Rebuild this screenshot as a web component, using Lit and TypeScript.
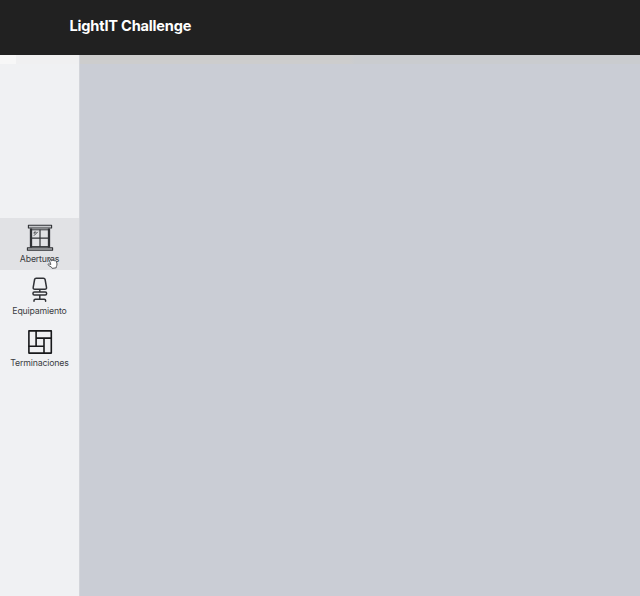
import { LitElement, html, css, svg } from "lit";
import { customElement, property } from "lit/decorators.js";

const icons = {
  window: svg`
    <path d="M5 4.5v19.2M23 4.5v19.2" stroke-width="2.3" stroke-linecap="butt"/>
    <path d="M6 5.8h16M6 22.6h16" stroke-width="1"/>
    <path d="M14 6v16.4M6 14.2h16" stroke-width="1.2"/>
    <path d="M8.2 11.4 11.5 8.1M8.2 9.4V8.1h1.6" stroke-width=".9"/>
    <rect x="2.4" y="1.2" width="23.2" height="2.8" stroke-width="1.1" fill="#c6c8cb"/>
    <rect x="1.4" y="23.8" width="25.2" height="2.5" stroke-width="1.1" fill="#a9abae"/>`,
  chair: svg`
    <path stroke-width="1.5" d="M10.2 2.2h7.2c1 0 1.5.4 1.7 1.3l1.4 7.8c.2 1.3-.4 2-1.6 2H8.8c-1.2 0-1.8-.7-1.6-2l1.4-7.8c.1-.9.6-1.3 1.6-1.3zM13.8 13.3v2.7M8.3 16h11c1.8 0 1.8 3 0 3h-11c-1.8 0-1.8-3 0-3zM13.8 19v4M8 25.2v-.6c0-.9.5-1.4 1.4-1.4h8.8c.9 0 1.4.5 1.4 1.4v.6"/>`,
  floor: svg`
    <g stroke="#18191b" stroke-width="1.6"><rect x="2.9" y="2.9" width="22.4" height="22.2"/>
    <path d="M10.1 3v15.2M10.1 10.1h15.2M18 10.1v15M2.9 18.2H18"/></g>`,
};

@customElement("side-item")
class SideItem extends LitElement {
  @property() label = "";
  @property() icon: keyof typeof icons = "window";
  static styles = css`
    :host { display: flex; flex-direction: column; align-items: center; box-sizing: border-box; height: 52px; padding-top: 6px; color: #3b3d42; }
    :host([active]) { background: #e1e2e5; }
    svg { width: 28px; height: 28px; fill: none; stroke: #303236; stroke-width: 1.3; stroke-linejoin: round; stroke-linecap: round; flex: none; }
    .label { font: 8.75px/12px Inter, sans-serif; letter-spacing: -0.16px; white-space: nowrap; margin-top: 1px; }
  `;
  render() {
    return html`<svg viewBox="0 0 28 28">${icons[this.icon]}</svg><span class="label">${this.label}</span>`;
  }
}

@customElement("app-root")
class AppRoot extends LitElement {
  static styles = css`
    :host { display: flex; flex-direction: column; height: 100vh; overflow: hidden; font-family: Inter, sans-serif; }
    header { box-sizing: border-box; height: 55px; flex: none; background: #212121; padding: 16px 0 0 69.5px; }
    h1 { margin: 0; color: #fff; font-size: 14.6px; line-height: 20px; font-weight: 700; letter-spacing: -0.2px; white-space: nowrap; }
    .body { flex: 1; display: flex; min-height: 0; }
    nav { position: relative; box-sizing: border-box; width: 80px; padding-top: 163px; background: linear-gradient(90deg, #f7f7f7 16px, #f0f0f1 16px) 0 0 / 100% 9px no-repeat, #f0f1f3; border-right: 1px solid #d3d5da; }
    main { flex: 1; background: linear-gradient(90deg, #cdcdcd 270px, #cacccf 275px) 0 0 / 100% 9px no-repeat, #cacdd5; }
    .cursor { position: absolute; left: 47px; top: 202px; width: 11px; height: 12px; }
  `;
  render() {
    return html`
      <header><h1>LightIT Challenge</h1></header>
      <div class="body">
        <nav>
          <side-item active icon="window" label="Aberturas"></side-item>
          <side-item icon="chair" label="Equipamiento"></side-item>
          <side-item icon="floor" label="Terminaciones"></side-item>
          <svg class="cursor" viewBox="0 0 11 12"><path d="M3.5 6.2 1.7 2.2C1.3 1.1 2.6.5 3.1 1.5l1.2 2.6c.3-.9 1.4-.9 1.7-.2.4-.7 1.4-.6 1.7.1.6-.5 1.5-.2 1.7.5l.6 2.4c.2 1.2-.5 1.8-.6 2.6l-.2 1.3-4 .6-.7-1.2-3-1.8c-1.1-.8-.3-1.8.7-1.4l1.6.5z" fill="#fff" stroke="#45464a" stroke-width=".9" stroke-linejoin="round"/></svg>
        </nav>
        <main></main>
      </div>`;
  }
}
